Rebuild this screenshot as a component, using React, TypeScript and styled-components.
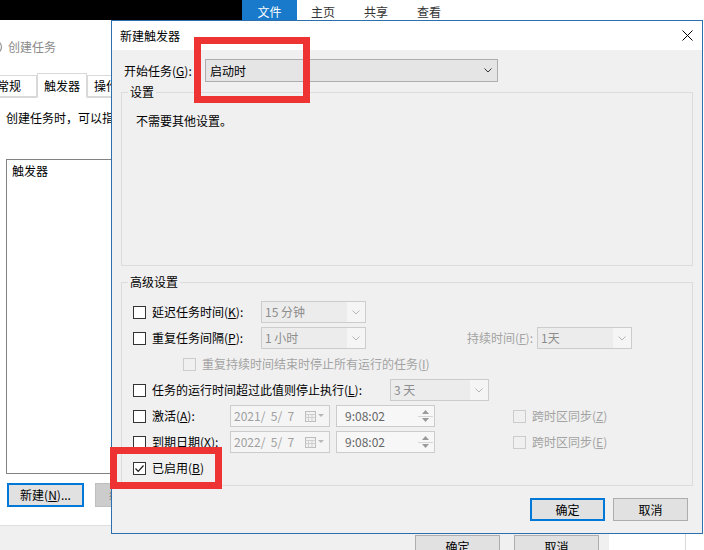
import styled, { createGlobalStyle } from "styled-components";

const GlobalStyle = createGlobalStyle`
  html, body { margin: 0; padding: 0; background: #ffffff; }
  body {
    font-family: "Noto Sans CJK SC", "Noto Sans", sans-serif;
    font-size: 12px;
    line-height: 16px;
    color: #000;
  }
  * { box-sizing: border-box; }
`;

const Desktop = styled.div`
  position: relative;
  width: 704px;
  height: 550px;
  overflow: hidden;
  background: #fff;
`;

/* ---------- windows behind ---------- */

const DarkWindow = styled.div`
  position: absolute;
  left: 0;
  top: 0;
  width: 242px;
  height: 20px;
  background: #000;
`;

const Explorer = styled.div`
  position: absolute;
  left: 242px;
  top: 0;
  right: 0;
  bottom: 0;
  display: flex;
  flex-direction: column;
  background: #fff;
`;

const Ribbon = styled.div`
  display: flex;
  height: 20px;
  flex: none;
`;

const FileTab = styled.div`
  width: 55px;
  padding-top: 4px;
  text-align: center;
  background: #1979ca;
  color: #fff;
`;

const RibbonTab = styled.div`
  width: 53px;
  padding: 4px 0 0 14px;
  color: #333;
`;

const ExplorerBody = styled.div`
  flex: 1;
  display: flex;
`;

const ExplorerPane = styled.div`
  width: 444px;
  border-right: 1px solid #d9d9d9;
`;

const TaskWindow = styled.div`
  position: absolute;
  left: 0;
  top: 20px;
  width: 609px;
  height: 560px;
  background: #fff;
  display: flex;
  flex-direction: column;
`;

const TaskTitle = styled.div`
  height: 54px;
  flex: none;
  display: flex;
  align-items: center;
  gap: 5px;
  color: #8a8a8a;
`;

const TitleIcon = styled.span`
  margin-left: -13px;
  display: flex;
`;

const TabStrip = styled.div`
  height: 24px;
  flex: none;
  display: flex;
  align-items: flex-end;
  border-bottom: 1px solid #d9d9d9;
`;

const Tab = styled.div<{ $active?: boolean; $w?: number }>`
  height: ${(p) => (p.$active ? 25 : 22)}px;
  margin-bottom: ${(p) => (p.$active ? -1 : 0)}px;
  width: ${(p) => (p.$w ? `${p.$w}px` : "auto")};
  display: flex;
  align-items: center;
  padding: 0 6px;
  border: 1px solid #d9d9d9;
  border-bottom-color: ${(p) => (p.$active ? "#fff" : "#d9d9d9")};
  background: #fff;
  white-space: nowrap;
  &:first-child {
    margin-left: -10px;
  }
`;

const TabPanel = styled.div`
  height: 428px;
  flex: none;
  display: flex;
  flex-direction: column;
  padding-left: 6px;
  border-bottom: 1px solid #dfdfdf;
`;

const Description = styled.div`
  margin-top: 12px;
  white-space: nowrap;
`;

const ListBox = styled.div`
  margin-top: 33px;
  height: 315px;
  border: 1px solid #828282;
  padding: 3px 5px;
`;

const PanelButtons = styled.div`
  margin-top: 9px;
  padding-left: 1px;
  display: flex;
  gap: 11px;
`;

const PanelButton = styled.div<{ $default?: boolean; $disabled?: boolean }>`
  width: 77px;
  height: 24px;
  display: flex;
  align-items: center;
  justify-content: center;
  background: ${(p) => (p.$disabled ? "#cccccc" : "#e1e1e1")};
  border: 1px solid ${(p) => (p.$default ? "#0078d7" : p.$disabled ? "#bfbfbf" : "#adadad")};
  box-shadow: ${(p) => (p.$default ? "inset 0 0 0 1px #0078d7" : "none")};
  color: ${(p) => (p.$disabled ? "#838383" : "#000")};
`;

const BottomBar = styled.div`
  flex: 1;
  display: flex;
  justify-content: flex-end;
  gap: 14px;
  padding: 9px 10px 0 0;
  background: #f0f0f0;
`;

const BackButton = styled.div`
  width: 85px;
  height: 24px;
  display: flex;
  align-items: center;
  justify-content: center;
  background: #e1e1e1;
  border: 1px solid #adadad;
`;

/* ---------- dialog ---------- */

const Dialog = styled.div`
  position: absolute;
  left: 111px;
  top: 20px;
  width: 592px;
  height: 514px;
  border: 1px solid #2b6fae;
  background: #f0f0f0;
  display: flex;
  flex-direction: column;
`;

const TitleBar = styled.div`
  height: 29px;
  flex: none;
  display: flex;
  align-items: center;
  padding-left: 8px;
  background: #fff;
`;

const DialogTitle = styled.span`
  flex: 1;
`;

const CloseButton = styled.span`
  width: 30px;
  height: 29px;
  display: flex;
  align-items: center;
  justify-content: center;
`;

const StartRow = styled.div`
  margin: 9px 0 0 12px;
  display: flex;
  align-items: center;
`;

const FieldLabel = styled.span<{ $w: number }>`
  width: ${(p) => p.$w}px;
  flex: none;
  white-space: nowrap;
`;

const GroupBox = styled.fieldset<{ $gap: number }>`
  margin: ${(p) => p.$gap}px 9px 0;
  padding: 0;
  min-width: 0;
  border: 1px solid #dcdcdc;
`;

const GroupLegend = styled.legend`
  margin-left: 6px;
  padding: 0 2px;
  line-height: 16px;
`;

const GroupBody = styled.div<{ $h?: number; $pad: string }>`
  height: ${(p) => (p.$h ? `${p.$h}px` : "auto")};
  padding: ${(p) => p.$pad};
`;

const Row = styled.div<{ $indent?: number }>`
  height: 26px;
  display: flex;
  align-items: center;
  padding-left: ${(p) => p.$indent ?? 0}px;
`;

const Check = styled.label<{ $w?: number; $off?: number; $disabled?: boolean }>`
  flex: none;
  display: flex;
  align-items: center;
  gap: 6px;
  width: ${(p) => (p.$w ? `${p.$w}px` : "auto")};
  margin-left: ${(p) => p.$off ?? 0}px;
  color: ${(p) => (p.$disabled ? "#a3a3a3" : "#000")};
  white-space: nowrap;
`;

const CheckText = styled.span`
  white-space: nowrap;
`;

const Box = styled.span<{ $disabled?: boolean }>`
  flex: none;
  width: 13px;
  height: 13px;
  display: flex;
  align-items: center;
  justify-content: center;
  border: 1px solid ${(p) => (p.$disabled ? "#cccccc" : "#333333")};
  background: ${(p) => (p.$disabled ? "#f0f0f0" : "#ffffff")};
`;

const Combo = styled.div<{ $w: number; $disabled?: boolean }>`
  flex: none;
  width: ${(p) => p.$w}px;
  height: ${(p) => (p.$disabled ? 22 : 23)}px;
  display: flex;
  border: 1px solid ${(p) => (p.$disabled ? "#cccccc" : "#adadad")};
  background: ${(p) => (p.$disabled ? "#f5f5f5" : "#e5e5e5")};
  color: ${(p) => (p.$disabled ? "#8d8d8d" : "#000")};
`;

const ComboValue = styled.span<{ $disabled?: boolean }>`
  flex: 1;
  display: flex;
  align-items: center;
  padding-left: ${(p) => (p.$disabled ? 3 : 4)}px;
  white-space: nowrap;
  background: ${(p) => (p.$disabled ? "#ececec" : "transparent")};
`;

const ComboArrow = styled.span`
  width: 18px;
  flex: none;
  display: flex;
  align-items: center;
  justify-content: center;
`;

const SideLabel = styled.span<{ $w: number }>`
  width: ${(p) => p.$w}px;
  flex: none;
  padding-right: 4px;
  text-align: right;
  color: #a3a3a3;
  white-space: nowrap;
`;

const DateBox = styled.div`
  flex: none;
  width: 100px;
  height: 22px;
  display: flex;
  align-items: center;
  padding-left: 3px;
  border: 1px solid #cccccc;
  background: #f5f5f5;
  color: #a0a0a0;
`;

const DateText = styled.span`
  flex: 1;
  white-space: pre;
`;

const DateIcon = styled.span`
  width: 24px;
  display: flex;
  align-items: center;
`;

const TimeBox = styled.div`
  flex: none;
  width: 99px;
  height: 22px;
  margin-left: 6px;
  display: flex;
  align-items: center;
  padding-left: 8px;
  border: 1px solid #cccccc;
  background: #f7f7f7;
  color: #666;
`;

const TimeText = styled.span`
  flex: 1;
`;

const Spinner = styled.span`
  width: 15px;
  height: 16px;
  margin-right: 1px;
  display: flex;
  flex-direction: column;
`;

const SpinHalf = styled.span<{ $top?: boolean }>`
  flex: 1;
  display: flex;
  align-items: center;
  justify-content: center;
  border-bottom: ${(p) => (p.$top ? "1px solid #d6d6d6" : "none")};
`;

const DialogButtons = styled.div`
  margin: 12px 14px 0 0;
  display: flex;
  justify-content: flex-end;
  gap: 8px;
`;

const DialogButton = styled.div<{ $default?: boolean }>`
  width: 75px;
  height: 23px;
  display: flex;
  align-items: center;
  justify-content: center;
  background: #e1e1e1;
  border: 1px solid ${(p) => (p.$default ? "#0078d7" : "#adadad")};
  box-shadow: ${(p) => (p.$default ? "inset 0 0 0 1px #0078d7" : "none")};
`;

/* ---------- annotation ---------- */

const Highlight = styled.div<{ $x: number; $y: number; $w: number; $h: number }>`
  position: absolute;
  left: ${(p) => p.$x}px;
  top: ${(p) => p.$y}px;
  width: ${(p) => p.$w}px;
  height: ${(p) => p.$h}px;
  border: 7px solid #ee3333;
  pointer-events: none;
`;

/* ---------- drawings ---------- */

const Chevron = ({ color }: { color: string }) => (
  <svg width="8" height="5" viewBox="0 0 8 5">
    <polyline points="0.5,0.5 4,4 7.5,0.5" fill="none" stroke={color} strokeWidth="1" />
  </svg>
);

const CheckMark = () => (
  <svg width="11" height="11" viewBox="0 0 11 11">
    <polyline points="1.5,5.5 4.2,8.3 9.5,2.5" fill="none" stroke="#1a1a1a" strokeWidth="1.2" />
  </svg>
);

const CloseIcon = () => (
  <svg width="11" height="11" viewBox="0 0 11 11">
    <path d="M0.5 0.5 L10.5 10.5 M10.5 0.5 L0.5 10.5" stroke="#000" strokeWidth="1" />
  </svg>
);

const CalendarIcon = () => (
  <svg width="20" height="11" viewBox="0 0 20 11">
    <rect x="0.5" y="0.5" width="10" height="10" fill="#f2f2f2" stroke="#bdbdbd" />
    <path d="M0.5 3.5H10.5M0.5 6.5H10.5M3.5 3.5V10.5M7 3.5V10.5" stroke="#cfcfcf" />
    <path d="M13 3 H19 L16 6 Z" fill="#b8b8b8" />
  </svg>
);

const SpinArrow = ({ up }: { up?: boolean }) => (
  <svg width="7" height="4" viewBox="0 0 7 4">
    <path d={up ? "M0 4 L3.5 0 L7 4 Z" : "M0 0 L7 0 L3.5 4 Z"} fill="#9a9a9a" />
  </svg>
);

const TaskIcon = () => (
  <svg width="16" height="16" viewBox="0 0 16 16">
    <circle cx="8" cy="8" r="6.5" fill="none" stroke="#9a9a9a" strokeWidth="1.3" />
    <path d="M8 4 V8 H11" fill="none" stroke="#9a9a9a" strokeWidth="1.2" />
  </svg>
);

const DisabledCombo = ({ w, value }: { w: number; value: string }) => (
  <Combo $w={w} $disabled>
    <ComboValue $disabled>{value}</ComboValue>
    <ComboArrow>
      <Chevron color="#b5b5b5" />
    </ComboArrow>
  </Combo>
);

const DateTime = ({ date }: { date: string }) => (
  <>
    <DateBox>
      <DateText>{date}</DateText>
      <DateIcon>
        <CalendarIcon />
      </DateIcon>
    </DateBox>
    <TimeBox>
      <TimeText>9:08:02</TimeText>
      <Spinner>
        <SpinHalf $top>
          <SpinArrow up />
        </SpinHalf>
        <SpinHalf>
          <SpinArrow />
        </SpinHalf>
      </Spinner>
    </TimeBox>
  </>
);

export default function App() {
  return (
    <Desktop>
      <GlobalStyle />

      <Explorer>
        <Ribbon>
          <FileTab>文件</FileTab>
          <RibbonTab>主页</RibbonTab>
          <RibbonTab>共享</RibbonTab>
          <RibbonTab>查看</RibbonTab>
        </Ribbon>
        <ExplorerBody>
          <ExplorerPane />
        </ExplorerBody>
      </Explorer>

      <DarkWindow />

      <TaskWindow>
        <TaskTitle>
          <TitleIcon>
            <TaskIcon />
          </TitleIcon>
          创建任务
        </TaskTitle>
        <TabStrip>
          <Tab $w={47}>常规</Tab>
          <Tab $active>触发器</Tab>
          <Tab>操作</Tab>
          <Tab>条件</Tab>
          <Tab>设置</Tab>
        </TabStrip>
        <TabPanel>
          <Description>创建任务时，可以指定将触发任务的条件。</Description>
          <ListBox>触发器</ListBox>
          <PanelButtons>
            <PanelButton $default>
              <CheckText>
                新建(<u>N</u>)...
              </CheckText>
            </PanelButton>
            <PanelButton $disabled>
              <CheckText>
                编辑(<u>E</u>)...
              </CheckText>
            </PanelButton>
          </PanelButtons>
        </TabPanel>
        <BottomBar>
          <BackButton>确定</BackButton>
          <BackButton>取消</BackButton>
        </BottomBar>
      </TaskWindow>

      <Dialog>
        <TitleBar>
          <DialogTitle>新建触发器</DialogTitle>
          <CloseButton>
            <CloseIcon />
          </CloseButton>
        </TitleBar>

        <StartRow>
          <FieldLabel $w={81}>
            开始任务(<u>G</u>):
          </FieldLabel>
          <Combo $w={293}>
            <ComboValue>启动时</ComboValue>
            <ComboArrow>
              <Chevron color="#333" />
            </ComboArrow>
          </Combo>
        </StartRow>

        <GroupBox $gap={2}>
          <GroupLegend>设置</GroupLegend>
          <GroupBody $h={165} $pad="13px 0 0 14px">
            不需要其他设置。
          </GroupBody>
        </GroupBox>

        <GroupBox $gap={8}>
          <GroupLegend>高级设置</GroupLegend>
          <GroupBody $pad="9px 0 4px 11px">
            <Row>
              <Check $w={128}>
                <Box />
                <CheckText>
                  延迟任务时间(<u>K</u>):
                </CheckText>
              </Check>
              <DisabledCombo w={105} value="15 分钟" />
            </Row>

            <Row>
              <Check $w={128}>
                <Box />
                <CheckText>
                  重复任务间隔(<u>P</u>):
                </CheckText>
              </Check>
              <DisabledCombo w={105} value="1 小时" />
              <SideLabel $w={171}>
                持续时间(<u>F</u>):
              </SideLabel>
              <DisabledCombo w={95} value="1天" />
            </Row>

            <Row $indent={50}>
              <Check $disabled>
                <Box $disabled />
                <CheckText>
                  重复持续时间结束时停止所有运行的任务(<u>I</u>)
                </CheckText>
              </Check>
            </Row>

            <Row>
              <Check $w={257}>
                <Box />
                <CheckText>
                  任务的运行时间超过此值则停止执行(<u>L</u>):
                </CheckText>
              </Check>
              <DisabledCombo w={99} value="3 天" />
            </Row>

            <Row>
              <Check $w={97}>
                <Box />
                <CheckText>
                  激活(<u>A</u>):
                </CheckText>
              </Check>
              <DateTime date="2021/  5/  7" />
              <Check $off={78} $disabled>
                <Box $disabled />
                <CheckText>
                  跨时区同步(<u>Z</u>)
                </CheckText>
              </Check>
            </Row>

            <Row>
              <Check $w={97}>
                <Box />
                <CheckText>
                  到期日期(<u>X</u>):
                </CheckText>
              </Check>
              <DateTime date="2022/  5/  7" />
              <Check $off={78} $disabled>
                <Box $disabled />
                <CheckText>
                  跨时区同步(<u>E</u>)
                </CheckText>
              </Check>
            </Row>

            <Row>
              <Check>
                <Box>
                  <CheckMark />
                </Box>
                <CheckText>
                  已启用(<u>B</u>)
                </CheckText>
              </Check>
            </Row>
          </GroupBody>
        </GroupBox>

        <DialogButtons>
          <DialogButton $default>确定</DialogButton>
          <DialogButton>取消</DialogButton>
        </DialogButtons>
      </Dialog>

      <Highlight $x={194} $y={37} $w={116} $h={66} />
      <Highlight $x={110} $y={447} $w={112} $h={42} />
    </Desktop>
  );
}
